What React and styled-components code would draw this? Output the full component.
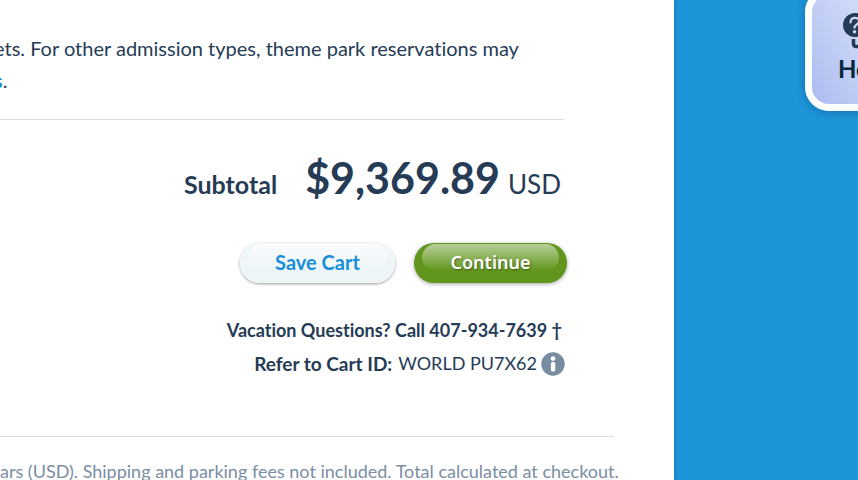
import React from "react";
import styled, { createGlobalStyle } from "styled-components";

const GlobalStyle = createGlobalStyle`
  * { box-sizing: border-box; }
  body {
    margin: 0;
    overflow: hidden;
    background: #1d95d8;
    color: #253b56;
    font-family: Lato, "Noto Sans", sans-serif;
    font-variant-ligatures: none;
  }
`;

const Page = styled.div`
  display: flex;
  min-height: 100vh;
  overflow: hidden;
`;

const Cart = styled.main`
  flex: 1;
  min-width: 0;
  height: 100vh;
  overflow: hidden;
  background: #fff;
  box-shadow: 0 0 4px rgba(0, 40, 80, 0.35);
`;

const Backdrop = styled.aside`
  flex: 0 0 184px;
  display: flex;
  justify-content: flex-end;
  align-items: flex-start;
`;

const Section = styled.section`
  margin-right: 110px;
`;

const Notice = styled.p`
  height: 120px;
  margin: 0;
  padding-top: 32px;
  margin-left: -6px;
  border-bottom: 1px solid #dadcde;
  font-size: 20px;
  line-height: 32px;
  white-space: nowrap;
`;

const NoticeLink = styled.a`
  color: #0083cc;
  text-decoration: none;
`;

const Subtotal = styled.div`
  display: flex;
  justify-content: flex-end;
  align-items: baseline;
  padding: 30px 3px 0 0;
  line-height: 56px;
`;

const SubtotalLabel = styled.span`
  margin-right: 28px;
  font-size: 25px;
  font-weight: 700;
`;

const Amount = styled.strong`
  margin-right: 8px;
  font-size: 43px;
  font-weight: 700;
`;

const Currency = styled.span`
  font-size: 26px;
`;

const Actions = styled.div`
  display: flex;
  justify-content: flex-end;
  gap: 19px;
  margin: 31px -3px 0 0;
`;

const Button = styled.button`
  position: relative;
  width: ${(p) => (p.$primary ? 153 : 155)}px;
  height: 40px;
  padding: 0 0 2px;
  border: 0;
  border-radius: 20px;
  font-family: ${(p) => (p.$primary ? '"Noto Sans"' : "Lato")}, sans-serif;
  font-size: ${(p) => (p.$primary ? 18 : 20)}px;
  font-weight: ${(p) => (p.$primary ? 600 : 700)};
  color: ${(p) => (p.$primary ? "#fff" : "#1890d7")};
  background: ${(p) => (p.$primary ? "#61951b" : "linear-gradient(#f0f6f9, #ecf4f8)")};
  box-shadow: ${(p) =>
    p.$primary
      ? "0 1px 4px rgba(0, 0, 0, 0.35)"
      : "0 1px 3px rgba(0, 0, 0, 0.4), inset 0 0 2px #fff"};
  text-shadow: ${(p) => (p.$primary ? "1px 1px 2px rgba(0, 0, 0, 0.4)" : "none")};
  cursor: pointer;

  &::before {
    content: "";
    position: absolute;
    inset: 1px 8px 12px;
    border-radius: 16px;
    background: ${(p) =>
      p.$primary
        ? "linear-gradient(rgba(255,255,255,.55), rgba(255,255,255,0))"
        : "linear-gradient(rgba(255,255,255,.6), rgba(255,255,255,0))"};
  }
`;

const ButtonLabel = styled.span`
  position: relative;
`;

const Contact = styled.div`
  padding-top: 31px;
  text-align: right;
  font-size: 18px;
  line-height: 33px;
`;

const Phone = styled.p`
  margin: 0 2px 0 0;
  font-weight: 700;
`;

const CartId = styled.p`
  display: flex;
  justify-content: flex-end;
  align-items: center;
  margin: 0 -1px 0 0;
`;

const CartIdLabel = styled.strong`
  margin-right: 6px;
  font-size: 19px;
  font-weight: 700;
`;

const InfoButton = styled.button`
  display: flex;
  margin-left: 4px;
  padding: 0;
  border: 0;
  background: none;
  cursor: pointer;
`;

const Footnote = styled.footer`
  margin: 56px 60px 0 0;
  padding-top: 21px;
  border-top: 1px solid #dadcde;
  color: #7a8ea4;
  font-size: 18px;
  line-height: 26px;
  white-space: nowrap;
`;

const HelpButton = styled.button`
  display: flex;
  flex: none;
  flex-direction: column;
  align-items: flex-start;
  gap: 4px;
  width: 106px;
  height: 123px;
  margin: -12px -53px 0 0;
  padding: 15px 0 0 26px;
  border: 7px solid #fff;
  border-radius: 24px;
  background: linear-gradient(60deg, #acbcf0, #cdd8f8 60%, #dce4fb);
  box-shadow: 0 1px 8px rgba(0, 40, 90, 0.35);
  color: #07263f;
  font-family: Lato, sans-serif;
  font-size: 24px;
  font-weight: 700;
  line-height: 30px;
  cursor: pointer;
`;

const HelpGlyph = styled.svg`
  display: block;
  margin-left: 5px;
`;

function InfoIcon() {
  return (
    <svg width="24" height="24" viewBox="0 0 24 24" aria-hidden="true">
      <circle cx="12" cy="12" r="11.7" fill="#788ba1" />
      <circle cx="12" cy="6.6" r="2.4" fill="#fff" />
      <rect x="9.9" y="10" width="4.4" height="9.6" rx="1.7" fill="#fff" />
    </svg>
  );
}

function HelpIcon() {
  return (
    <HelpGlyph width="32" height="40" viewBox="0 0 32 40" aria-hidden="true">
      <circle cx="12" cy="15" r="12" fill="#253b56" />
      <path
        d="M7.5 12.5C7.5 9 9.5 7.8 12 7.8c2.4 0 4.1 1.3 4.1 3.4 0 3.2-4.6 3.2-4.6 6.5"
        fill="none"
        stroke="#cbd6f7"
        strokeWidth="2.2"
        strokeLinecap="round"
      />
      <circle cx="11.5" cy="21.8" r="1.7" fill="#cbd6f7" />
      <path
        d="M10.5 29v4.5q0 3 3 3H24q5 0 5-5V20"
        fill="none"
        stroke="#253b56"
        strokeWidth="3.5"
      />
    </HelpGlyph>
  );
}

export default function App() {
  return (
    <>
      <GlobalStyle />
      <Page>
        <Cart>
          <Section>
            <Notice>
              ets. For other admission types, theme park reservations may
              <br />
              <NoticeLink href="#reservations">s</NoticeLink>.
            </Notice>
            <Subtotal>
              <SubtotalLabel>Subtotal</SubtotalLabel>
              <Amount>$9,369.89</Amount>
              <Currency>USD</Currency>
            </Subtotal>
            <Actions>
              <Button type="button"><ButtonLabel>Save Cart</ButtonLabel></Button>
              <Button type="button" $primary><ButtonLabel>Continue</ButtonLabel></Button>
            </Actions>
            <Contact>
              <Phone>Vacation Questions? Call 407-934-7639 †</Phone>
              <CartId>
                <CartIdLabel>Refer to Cart ID:</CartIdLabel>
                WORLD PU7X62
                <InfoButton type="button" aria-label="Cart ID information"><InfoIcon /></InfoButton>
              </CartId>
            </Contact>
          </Section>
          <Footnote>
            ars (USD). Shipping and parking fees not included. Total calculated at checkout.
          </Footnote>
        </Cart>
        <Backdrop>
          <HelpButton type="button">
            <HelpIcon />
            Help
          </HelpButton>
        </Backdrop>
      </Page>
    </>
  );
}
